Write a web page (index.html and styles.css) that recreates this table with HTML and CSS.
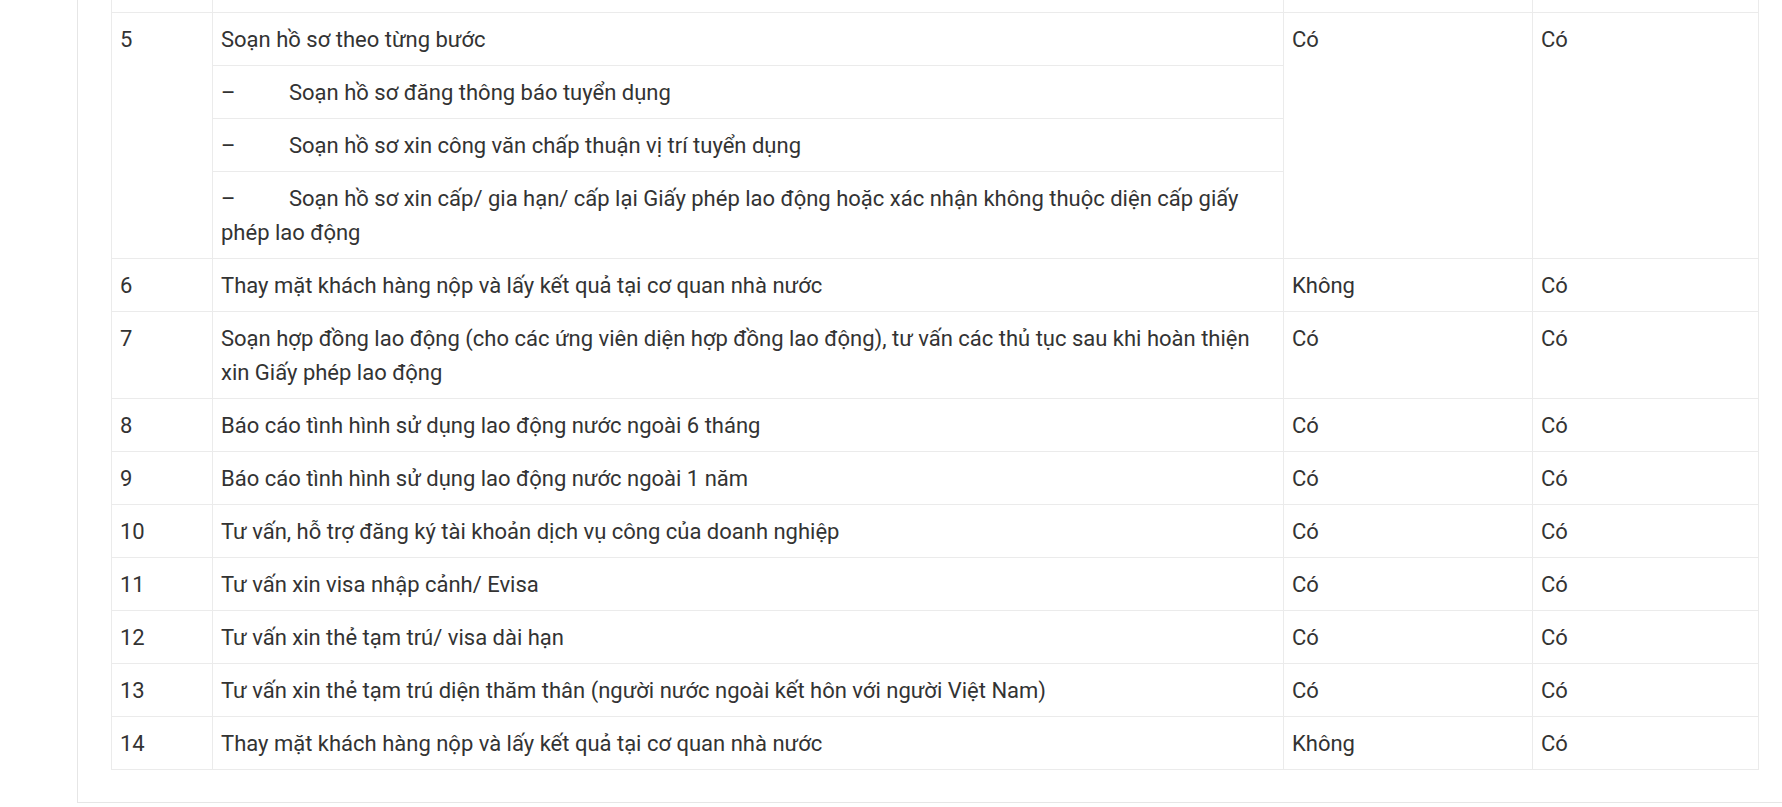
FILE: index.html
```html
<!DOCTYPE html>
<html lang="vi">
<head>
  <meta charset="UTF-8"/>
  <meta name="viewport" content="width=device-width, initial-scale=1.0"/>
  <title>Bảng dịch vụ giấy phép lao động</title>
  <link rel="stylesheet" href="styles.css">
</head>
<body>
  <div class="card">
    <table class="service-table">
      <colgroup>
        <col class="col-no">
        <col class="col-task">
        <col class="col-a">
        <col class="col-b">
      </colgroup>
      <tbody>
        <!-- phần cuối của hàng trước, bị cắt -->
        <tr class="cut">
          <td></td><td></td><td></td><td></td>
        </tr>
        <tr>
          <td rowspan="4">5</td>
          <td>Soạn hồ sơ theo từng bước</td>
          <td rowspan="4">Có</td>
          <td rowspan="4">Có</td>
        </tr>
        <tr>
          <td class="step">–&#9;Soạn hồ sơ đăng thông báo tuyển dụng</td>
        </tr>
        <tr>
          <td class="step">–&#9;Soạn hồ sơ xin công văn chấp thuận vị trí tuyển dụng</td>
        </tr>
        <tr>
          <td class="step">–&#9;Soạn hồ sơ xin cấp/ gia hạn/ cấp lại Giấy phép lao động hoặc xác nhận không thuộc diện cấp giấy phép lao động</td>
        </tr>
        <tr>
          <td>6</td>
          <td>Thay mặt khách hàng nộp và lấy kết quả tại cơ quan nhà nước</td>
          <td>Không</td>
          <td>Có</td>
        </tr>
        <tr>
          <td>7</td>
          <td>Soạn hợp đồng lao động (cho các ứng viên diện hợp đồng lao động), tư vấn các thủ tục sau khi hoàn thiện xin Giấy phép lao động</td>
          <td>Có</td>
          <td>Có</td>
        </tr>
        <tr>
          <td>8</td>
          <td>Báo cáo tình hình sử dụng lao động nước ngoài 6 tháng</td>
          <td>Có</td>
          <td>Có</td>
        </tr>
        <tr>
          <td>9</td>
          <td>Báo cáo tình hình sử dụng lao động nước ngoài 1 năm</td>
          <td>Có</td>
          <td>Có</td>
        </tr>
        <tr>
          <td>10</td>
          <td>Tư vấn, hỗ trợ đăng ký tài khoản dịch vụ công của doanh nghiệp</td>
          <td>Có</td>
          <td>Có</td>
        </tr>
        <tr>
          <td>11</td>
          <td>Tư vấn xin visa nhập cảnh/ Evisa</td>
          <td>Có</td>
          <td>Có</td>
        </tr>
        <tr>
          <td>12</td>
          <td>Tư vấn xin thẻ tạm trú/ visa dài hạn</td>
          <td>Có</td>
          <td>Có</td>
        </tr>
        <tr>
          <td>13</td>
          <td>Tư vấn xin thẻ tạm trú diện thăm thân (người nước ngoài kết hôn với người Việt Nam)</td>
          <td>Có</td>
          <td>Có</td>
        </tr>
        <tr>
          <td>14</td>
          <td>Thay mặt khách hàng nộp và lấy kết quả tại cơ quan nhà nước</td>
          <td>Không</td>
          <td>Có</td>
        </tr>
      </tbody>
    </table>
  </div>
</body>
</html>
```

FILE: styles.css
```css
body {
  margin: 0;
  padding: 0;
  background: #fff;
  color: #333;
  font-family: Roboto, "Noto Sans", sans-serif;
  overflow: hidden;
}
/* khung bài viết, cạnh phải nằm ngoài màn hình */
.card {
  margin-left: 77px;
  width: 1720px;
  padding: 0 33px 32px 33px;
  border-left: 1px solid #e6e6e6;
  border-bottom: 1px solid #e6e6e6;
  box-sizing: border-box;
}
.service-table {
  width: 1647px;
  table-layout: fixed;
  border-collapse: collapse;
  font-size: 22px;
  line-height: 34px;
}
.col-no { width: 101px; }
.col-task { width: 1071px; }
.col-a { width: 249px; }
.col-b { width: 226px; }
.service-table td {
  border: 1px solid #ebebeb;
  padding: 10px 8px 8px;
  vertical-align: top;
  text-align: left;
}
.service-table .cut td {
  border-top: none;
  height: 12px;
  padding: 0;
}
/* gạch đầu dòng kiểu Word: dấu – rồi một tab */
.service-table td.step {
  white-space: pre-wrap;
  tab-size: 68px;
}
```
